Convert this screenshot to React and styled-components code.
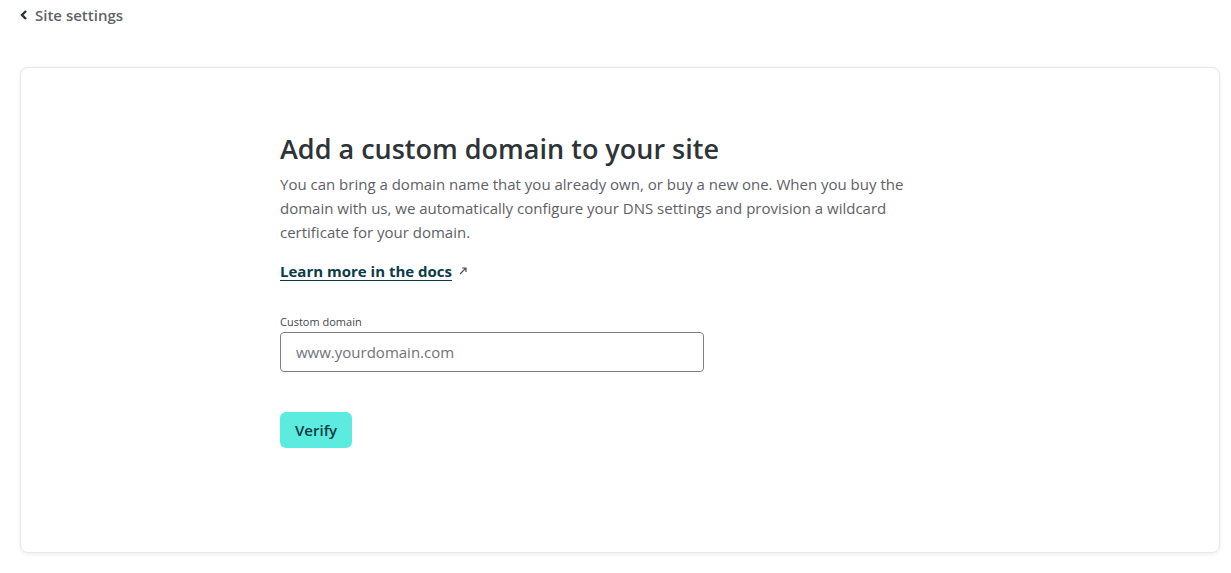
import React from 'react'
import styled, { createGlobalStyle } from 'styled-components'

const GlobalStyle = createGlobalStyle`
  body {
    margin: 0;
    background: #ffffff;
    font-family: "Open Sans", "Noto Sans", sans-serif;
    color: #2e3338;
  }
`

const Page = styled.div`
  padding: 4px 11px 20px 20px;
`

const BackLink = styled.a`
  display: flex;
  width: max-content;
  align-items: center;
  gap: 7px;
  color: #5f6368;
  font-size: 15px;
  font-weight: 600;
  text-decoration: none;
  height: 22px;
`

const Card = styled.section`
  margin-top: 41px;
  background: #fff;
  border: 1px solid #e6e8ea;
  border-radius: 8px;
  box-shadow: 0 1px 4px rgba(0, 0, 0, 0.08);
  padding: 61px 20px 104px 259px;
`

const Title = styled.h1`
  margin: 0;
  font-size: 27px;
  font-weight: 600;
  line-height: 40px;
  color: #2e3338;
`

const Lead = styled.p`
  margin: 3px 0 0;
  max-width: 645px;
  font-size: 15px;
  line-height: 24px;
  color: #5d6166;
`

const DocsRow = styled.div`
  margin-top: 17px;
  display: flex;
  align-items: center;
  gap: 6px;
`

const DocsLink = styled.a`
  font-size: 15px;
  font-weight: 700;
  color: #0b3b4a;
  text-decoration: underline;
  text-underline-offset: 3px;
`

const Field = styled.div`
  margin-top: 34px;
  display: flex;
  flex-direction: column;
  gap: 3px;
`

const Label = styled.label`
  font-size: 11px;
  line-height: 14px;
  color: #44484c;
`

const Input = styled.input`
  box-sizing: border-box;
  width: 424px;
  height: 40px;
  border: 1px solid #7b7f83;
  border-radius: 4px;
  padding: 0 15px;
  font-family: inherit;
  font-size: 15px;
  color: #2e3338;
  &::placeholder {
    color: #6f7377;
  }
`

const Button = styled.button`
  margin-top: 40px;
  height: 36px;
  padding: 0 15px;
  border: none;
  border-radius: 6px;
  background: #5cebdf;
  color: #0d3a44;
  font-family: inherit;
  font-size: 15px;
  font-weight: 600;
  cursor: pointer;
`

const Arrow = () => (
  <svg width="10" height="10" viewBox="0 0 10 10" fill="none" stroke="#4a4f54" strokeWidth="1.2">
    <path d="M2 8 L8 2 M4 2 H8 V6" />
  </svg>
)

export default function App() {
  return (
    <>
      <GlobalStyle />
      <Page>
        <BackLink href="#">
          <svg width="8" height="10" viewBox="0 0 8 10" fill="none" stroke="#2e3338" strokeWidth="2.4">
            <path d="M6 1 L2 5 L6 9" />
          </svg>
          Site settings
        </BackLink>
        <Card>
          <Title>Add a custom domain to your site</Title>
          <Lead>
            You can bring a domain name that you already own, or buy a new one. When you buy the
            domain with us, we automatically configure your DNS settings and provision a wildcard
            certificate for your domain.
          </Lead>
          <DocsRow>
            <DocsLink href="#">Learn more in the docs</DocsLink>
            <Arrow />
          </DocsRow>
          <Field>
            <Label htmlFor="domain">Custom domain</Label>
            <Input id="domain" placeholder="www.yourdomain.com" />
          </Field>
          <Button>Verify</Button>
        </Card>
      </Page>
    </>
  )
}
